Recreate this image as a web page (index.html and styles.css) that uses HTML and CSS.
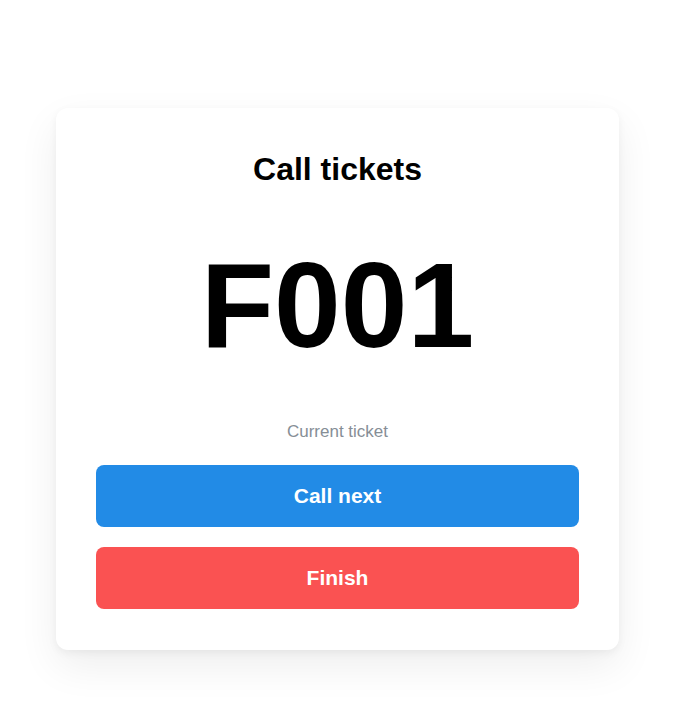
FILE: index.html
```html
<!DOCTYPE html>
<html>
<head>
<meta charset="utf-8">
<link rel="stylesheet" href="styles.css">
</head>
<body>
<div class="page">
  <div class="card">
    <h2 class="title">Call tickets</h2>
    <div class="ticket">F001</div>
    <div class="label">Current ticket</div>
    <button class="btn btn-blue">Call next</button>
    <button class="btn btn-red">Finish</button>
  </div>
</div>
</body>
</html>
```
FILE: styles.css
```css
html, body {
  margin: 0;
  padding: 0;
  background: #ffffff;
  font-family: "Liberation Sans", Arial, sans-serif;
}
.page {
  padding: 108px 69px 53px 56px;
}
.card {
  background: #ffffff;
  border-radius: 12px;
  box-shadow: 0 3px 8px rgba(0, 0, 0, 0.05), 0 16px 40px rgba(0, 0, 0, 0.07);
  padding: 40px 40px 41px;
  display: flex;
  flex-direction: column;
  align-items: stretch;
}
.title {
  margin: 0;
  font-size: 32px;
  line-height: 42px;
  font-weight: 700;
  text-align: center;
  color: #000;
}
.ticket {
  margin-top: 55px;
  font-size: 120px;
  line-height: 120px;
  font-weight: 700;
  text-align: center;
  color: #000;
}
.label {
  margin-top: 57px;
  font-size: 17px;
  line-height: 20px;
  text-align: center;
  color: #868e96;
}
.btn {
  height: 62px;
  border: none;
  border-radius: 8px;
  color: #fff;
  font-family: "Liberation Sans", Arial, sans-serif;
  font-size: 21px;
  font-weight: 700;
  padding: 0;
}
.btn-blue {
  margin-top: 23px;
  background: #228be6;
}
.btn-red {
  margin-top: 20px;
  background: #fa5252;
}
```
